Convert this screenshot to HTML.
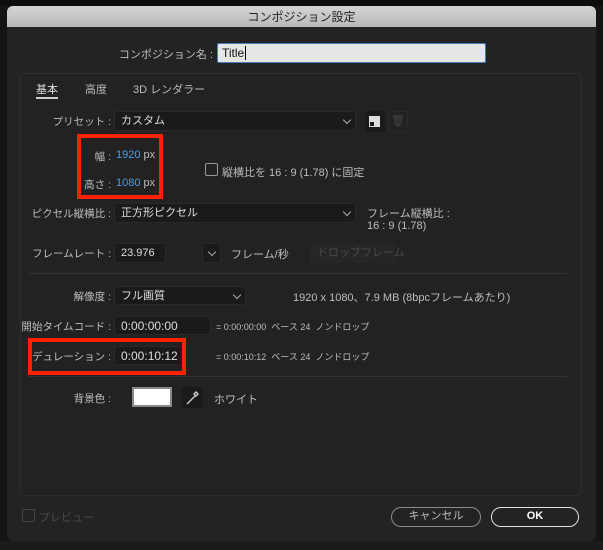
<!DOCTYPE html>
<html><head><meta charset="utf-8"><style>
*{margin:0;padding:0;box-sizing:border-box}
body{width:603px;height:550px;overflow:hidden;background:#141414;position:relative;font-family:"Liberation Sans","Noto Sans CJK JP",sans-serif;font-size:11px;color:#bdbdbd}
.a{position:absolute;white-space:nowrap}
.r{text-align:right}
.dlg{position:absolute;left:7px;top:6px;width:589px;height:535px;background:#232323;border-radius:6px;overflow:hidden}
.tb{position:absolute;left:0;top:0;width:589px;height:21px;background:linear-gradient(#d4d4d4,#b9b9b9);color:#222;text-align:center;font-size:12px;line-height:22px}
.panel{position:absolute;left:20px;top:73px;width:561px;height:423px;border:1px solid #2e2e2e;border-radius:3px;background:#222}
.box{position:absolute;background:#1a1a1a;border:1px solid #2a2a2a;border-radius:3px;color:#ddd;font-size:11px;padding-left:6px;line-height:18px}
.chev{position:absolute;right:5px;top:5px;width:6px;height:6px;border-right:1px solid #aaa;border-bottom:1px solid #aaa;transform:rotate(45deg)}
.red{position:absolute;border:4px solid #ff2200}
.blue{color:#4c9be8}
.sep{position:absolute;height:1px;background:#333}
.btn{position:absolute;border-radius:10px;text-align:center;line-height:17px;font-size:11px}
.lb{position:absolute;white-space:nowrap;text-align:right;left:0;width:111px;font-size:10.5px}
</style></head><body>
<div class="a" style="left:0;top:0;width:603px;height:6px;background:#0d0d0d"></div>
<div class="dlg">
<div class="tb">コンポジション設定</div>
</div>
<div class="lb" style="width:213px;top:46px;font-size:11px">コンポジション名 :</div>
<div class="a" style="left:217px;top:43px;width:269px;height:20px;background:#e6e6e6;border:1px solid #4a7cc0;border-radius:2px;color:#111;padding-left:4px;line-height:18px;font-size:12px">Title<span style="border-left:1px solid #000;margin-left:1px"></span></div>
<div class="panel"></div>
<div class="a" style="left:36px;top:81px;color:#ddd">基本</div>
<div class="a" style="left:36px;top:97px;width:22px;height:2px;background:#ccc"></div>
<div class="a" style="left:85px;top:81px">高度</div>
<div class="a" style="left:133px;top:81px">3D レンダラー</div>

<div class="lb" style="top:114px">プリセット :</div>
<div class="box" style="left:114px;top:111px;width:242px;height:20px">カスタム<div class="chev"></div></div>
<div class="a" style="left:365px;top:111px;width:20px;height:21px;background:#1a1a1a;border-radius:3px"><div class="a" style="left:4px;top:5px;width:11px;height:11px;background:#ddd"></div><div class="a" style="left:5px;top:11px;width:4px;height:4px;background:#1a1a1a"></div></div>
<div class="a" style="left:388px;top:111px;width:20px;height:21px;border:1px solid #2b2b2b;border-radius:3px;color:#444;text-align:center;line-height:19px">🗑</div>

<div class="lb" style="top:149px">幅 :</div>
<div class="a" style="left:116px;top:149px"><span class="blue">1920</span> px</div>
<div class="lb" style="top:177px">高さ :</div>
<div class="a" style="left:116px;top:177px"><span class="blue">1080</span> px</div>
<div class="red" style="left:77px;top:134px;width:86px;height:65px"></div>
<div class="a" style="left:205px;top:163px;width:13px;height:13px;border:1px solid #999;border-radius:2px"></div>
<div class="a" style="left:222px;top:164px">縦横比を 16 : 9 (1.78) に固定</div>

<div class="lb" style="top:206px">ピクセル縦横比 :</div>
<div class="box" style="left:114px;top:203px;width:242px;height:20px">正方形ピクセル<div class="chev"></div></div>
<div class="a" style="left:367px;top:205px">フレーム縦横比 :</div>
<div class="a" style="left:367px;top:220px">16 : 9 (1.78)</div>

<div class="lb" style="top:246px">フレームレート :</div>
<div class="box" style="left:114px;top:243px;width:52px;height:20px">23.976</div>
<div class="box" style="left:202px;top:243px;width:19px;height:20px"><div class="chev"></div></div>
<div class="a" style="left:231px;top:246px">フレーム/秒</div>
<div class="a" style="left:310px;top:243px;width:86px;height:20px;background:#262626;border-radius:3px;color:#4a4a4a;padding-left:7px;line-height:20px">ドロップフレーム</div>
<div class="sep" style="left:28px;top:273px;width:539px"></div>

<div class="lb" style="top:289px">解像度 :</div>
<div class="box" style="left:114px;top:286px;width:132px;height:19px">フル画質<div class="chev"></div></div>
<div class="a" style="left:293px;top:289px">1920 x 1080、7.9 MB (8bpcフレームあたり)</div>

<div class="lb" style="top:319px">開始タイムコード :</div>
<div class="box" style="left:114px;top:316px;width:97px;height:19px;font-size:12px">0:00:00:00</div>
<div class="a" style="left:216px;top:320px;font-size:9px">= 0:00:00:00 &nbsp;ベース 24 &nbsp;ノンドロップ</div>

<div class="lb" style="top:349px">デュレーション :</div>
<div class="box" style="left:114px;top:346px;width:68px;height:19px;font-size:12px">0:00:10:12</div>
<div class="a" style="left:216px;top:350px;font-size:9px">= 0:00:10:12 &nbsp;ベース 24 &nbsp;ノンドロップ</div>
<div class="red" style="left:28px;top:338px;width:158px;height:37px"></div>
<div class="sep" style="left:28px;top:376px;width:539px"></div>

<div class="lb" style="top:391px">背景色 :</div>
<div class="a" style="left:132px;top:387px;width:40px;height:20px;background:#fff;border:2px solid #8a8a8a"></div>
<div class="a" style="left:182px;top:387px;width:21px;height:21px;background:#1a1a1a;border-radius:3px"><svg width="21" height="21"><path d="M6 16 L13 9 M12 7 l2 -2 l2 2 l-2 2z M6 16 l-1 1" stroke="#ccc" stroke-width="1.4" fill="none"/></svg></div>
<div class="a" style="left:214px;top:391px">ホワイト</div>

<div class="a" style="left:22px;top:509px;width:13px;height:13px;border:1px solid #444;border-radius:2px"></div>
<div class="a" style="left:39px;top:509px;color:#4a4a4a">プレビュー</div>
<div class="btn" style="left:391px;top:507px;width:90px;height:20px;border:1px solid #8a8a8a;color:#bbb">キャンセル</div>
<div class="btn" style="left:491px;top:507px;width:88px;height:20px;border:1.5px solid #e0e0e0;color:#fff;font-weight:bold">OK</div>
<div class="a" style="left:0;top:541px;width:603px;height:9px;background:#1b1b1b"></div>
</body></html>
